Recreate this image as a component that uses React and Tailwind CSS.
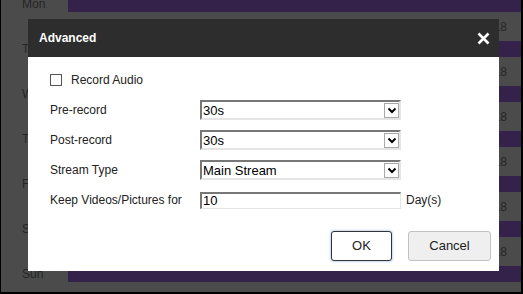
import React from "react";

const days = ["Mon", "Tue", "Wed", "Thu", "Fri", "Sat", "Sun"];

const Chevron = () => (
  <svg width="10" height="7" viewBox="0 0 10 7">
    <path d="M1.5 1.5 L5 5 L8.5 1.5" fill="none" stroke="#000" strokeWidth="2" />
  </svg>
);

const Select = ({ value }) => (
  <div className="relative w-[201px] h-[20px] bg-white border-t-2 border-l-2 border-r-2 border-b-2 border-t-[#777] border-l-[#777] border-r-[#e4e4e4] border-b-[#e4e4e4] flex items-center">
    <span className="pl-[1px] text-[13px] leading-none text-black">{value}</span>
    <div className="absolute right-[0px] top-[1px] w-[15px] h-[15px] border border-[#a8a8a8] bg-white flex items-center justify-center">
      <Chevron />
    </div>
  </div>
);

const Row = ({ label, children }) => (
  <div className="flex items-center h-[30px]">
    <div className="w-[150px] text-[12px] text-[#222]">{label}</div>
    {children}
  </div>
);

const App = () => {
  return (
    <div
      className="relative w-[523px] h-[294px] overflow-hidden bg-[#4b4b4b] border-l border-r-2 border-b-2 border-black"
      style={{ fontFamily: '"Liberation Sans", Arial, sans-serif' }}
    >
      {/* schedule behind the overlay */}
      <div className="flex flex-col -mt-[4px]">
        {days.map((d, i) => (
          <div key={d} className="flex h-[45px]">
            <div className="w-[67px] h-[16px] pl-[21px] text-[12px] leading-[16px] text-[#262626]">{d}</div>
            <div className="flex-1 flex flex-col">
              <div className="h-[16px] bg-[#35224a]"></div>
              <div className="h-[29px] flex items-center justify-end pr-[14px] text-[12px] text-[#262626]">
                {i < days.length - 1 ? "18" : ""}
              </div>
            </div>
          </div>
        ))}
      </div>

      {/* dialog */}
      <div className="absolute left-[27px] top-[19px] w-[471px] h-[252px] bg-white flex flex-col">
        <div className="h-[38px] bg-[#2d2d2d] flex items-center justify-between pl-[11px] pr-[9px]">
          <span className="text-white font-bold text-[12px]">Advanced</span>
          <svg width="13" height="13" viewBox="0 0 13 13">
            <path d="M1.5 1.5 L11.5 11.5 M11.5 1.5 L1.5 11.5" stroke="#fff" strokeWidth="2.6" />
          </svg>
        </div>
        <div className="flex flex-col pl-[22px] pt-[8px]">
          <div className="flex items-center h-[30px]">
            <div className="w-[12px] h-[12px] border border-[#555] bg-white"></div>
            <span className="ml-[9px] text-[12px] text-[#222]">Record Audio</span>
          </div>
          <Row label="Pre-record">
            <Select value="30s" />
          </Row>
          <Row label="Post-record">
            <Select value="30s" />
          </Row>
          <Row label="Stream Type">
            <Select value="Main Stream" />
          </Row>
          <Row label="Keep Videos/Pictures for">
            <div className="w-[201px] h-[17px] bg-white border-t-2 border-l-2 border-r border-b border-t-[#777] border-l-[#777] border-r-[#e4e4e4] border-b-[#e4e4e4] flex items-center">
              <span className="pl-[1px] text-[13px] leading-none text-black">10</span>
            </div>
            <span className="ml-[5px] text-[12px] text-[#222]">Day(s)</span>
          </Row>
        </div>
        <div className="flex justify-end gap-[16px] pr-[8px] mt-[16px]">
          <button className="w-[61px] h-[30px] bg-white border border-[#333] rounded-[3px] text-[13px] text-[#222] shadow-[0_0_2px_1px_#c7d8f2]">
            OK
          </button>
          <button className="w-[83px] h-[30px] bg-[#efefef] border border-[#c2c2c2] rounded-[3px] text-[13px] text-[#222]">
            Cancel
          </button>
        </div>
      </div>
    </div>
  );
};

export default App;
